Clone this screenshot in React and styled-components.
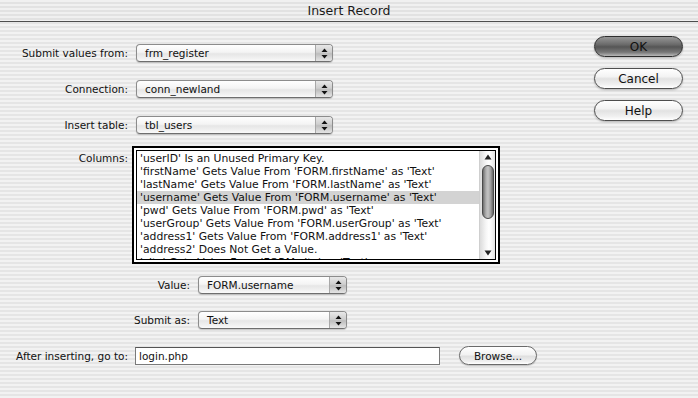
import React from "react";
import styled, { createGlobalStyle } from "styled-components";

const GlobalStyle = createGlobalStyle`
  html, body {
    margin: 0;
    padding: 0;
  }
  body {
    width: 698px;
    height: 398px;
    overflow: hidden;
    font-family: "Lucida Grande", "DejaVu Sans", sans-serif;
    color: #111;
  }
`;

const pinstripe = `repeating-linear-gradient(
  to bottom,
  #f2f2f2 0px,
  #f2f2f2 2px,
  #e5e5e5 2px,
  #e5e5e5 4px
)`;

const columns = [
  "'userID' Is an Unused Primary Key.",
  "'firstName' Gets Value From 'FORM.firstName' as 'Text'",
  "'lastName' Gets Value From 'FORM.lastName' as 'Text'",
  "'username' Gets Value From 'FORM.username' as 'Text'",
  "'pwd' Gets Value From 'FORM.pwd' as 'Text'",
  "'userGroup' Gets Value From 'FORM.userGroup' as 'Text'",
  "'address1' Gets Value From 'FORM.address1' as 'Text'",
  "'address2' Does Not Get a Value.",
  "'city' Gets Value From 'FORM.city' as 'Text'"
];

function UpDown() {
  return (
    <svg width="7" height="11" viewBox="0 0 7 11">
      <path d="M3.5 0.5 L6.5 4 L0.5 4 Z" fill="#111" />
      <path d="M0.5 7 L6.5 7 L3.5 10.5 Z" fill="#111" />
    </svg>
  );
}

function Arrow({ down }) {
  return (
    <svg width="8" height="6" viewBox="0 0 8 6">
      {down ? (
        <path d="M0.5 0.5 L7.5 0.5 L4 5.5 Z" fill="#222" />
      ) : (
        <path d="M4 0.5 L7.5 5.5 L0.5 5.5 Z" fill="#222" />
      )}
    </svg>
  );
}

function Popup({ value, width }) {
  return (
    <PopupBox $width={width}>
      <PopupValue>{value}</PopupValue>
      <PopupArrows>
        <UpDown />
      </PopupArrows>
    </PopupBox>
  );
}

export default function App() {
  return (
    <Window>
      <GlobalStyle />
      <TitleBar>Insert Record</TitleBar>
      <Body>
        <Main>
          <Row $mt={22}>
            <Label $width={128}>Submit values from:</Label>
            <Popup value="frm_register" width={197} />
          </Row>
          <Row $mt={18}>
            <Label $width={128}>Connection:</Label>
            <Popup value="conn_newland" width={197} />
          </Row>
          <Row $mt={18}>
            <Label $width={128}>Insert table:</Label>
            <Popup value="tbl_users" width={197} />
          </Row>
          <Row $mt={12} $top $gap={4}>
            <Label $width={128} $pt={6}>Columns:</Label>
            <ListFrame>
              <ListInner>
                <ListItems>
                  {columns.map((c, i) => (
                    <ListItem key={i} $selected={i === 3}>
                      {c}
                    </ListItem>
                  ))}
                </ListItems>
                <ScrollBar>
                  <ScrollArrow>
                    <Arrow />
                  </ScrollArrow>
                  <Thumb />
                  <Track />
                  <ScrollArrow>
                    <Arrow down />
                  </ScrollArrow>
                </ScrollBar>
              </ListInner>
            </ListFrame>
          </Row>
          <Row $mt={12}>
            <Label $width={190}>Value:</Label>
            <Popup value="FORM.username" width={149} />
          </Row>
          <Row $mt={17}>
            <Label $width={190}>Submit as:</Label>
            <Popup value="Text" width={149} />
          </Row>
          <Row $mt={17} $gap={7}>
            <Label $width={128}>After inserting, go to:</Label>
            <TextField>login.php</TextField>
            <SmallButton>Browse...</SmallButton>
          </Row>
        </Main>
        <ButtonColumn>
          <PushButton $default>OK</PushButton>
          <PushButton>Cancel</PushButton>
          <PushButton>Help</PushButton>
        </ButtonColumn>
      </Body>
    </Window>
  );
}

const Window = styled.div`
  width: 698px;
  height: 398px;
  background: ${pinstripe};
  display: flex;
  flex-direction: column;
`;

const TitleBar = styled.div`
  height: 21px;
  flex: 0 0 21px;
  border-bottom: 1px solid #4e4e4e;
  display: flex;
  align-items: center;
  justify-content: center;
  font-size: 12.5px;
  color: #1a1a1a;
  background: repeating-linear-gradient(
    to bottom,
    #f0f0f0 0px,
    #f0f0f0 2px,
    #e2e2e2 2px,
    #e2e2e2 4px
  );
`;

const Body = styled.div`
  display: flex;
  flex: 1;
`;

const Main = styled.div`
  flex: 0 0 594px;
  display: flex;
  flex-direction: column;
`;

const Row = styled.div`
  display: flex;
  align-items: ${({ $top }) => ($top ? "flex-start" : "center")};
  gap: ${({ $gap }) => $gap ?? 8}px;
  margin-top: ${({ $mt }) => $mt}px;
`;

const Label = styled.div`
  width: ${({ $width }) => $width}px;
  flex: 0 0 auto;
  text-align: right;
  font-size: 10.5px;
  padding-top: ${({ $pt }) => $pt || 0}px;
  white-space: nowrap;
`;

const PopupBox = styled.div`
  width: ${({ $width }) => $width}px;
  height: 18px;
  box-sizing: border-box;
  border: 1px solid #8c8c8c;
  border-bottom-color: #6e6e6e;
  border-radius: 4px;
  display: flex;
  overflow: hidden;
  background: linear-gradient(
    to bottom,
    #ffffff 0%,
    #f4f4f4 45%,
    #e6e6e6 55%,
    #f2f2f2 85%,
    #fafafa 100%
  );
  box-shadow: 0 1px 1px rgba(0, 0, 0, 0.18);
`;

const PopupValue = styled.div`
  flex: 1;
  font-size: 10.5px;
  line-height: 16px;
  padding-left: 8px;
  white-space: nowrap;
`;

const PopupArrows = styled.div`
  width: 16px;
  display: flex;
  align-items: center;
  justify-content: center;
  border-left: 1px solid #a8a8a8;
  background: linear-gradient(
    to bottom,
    #e8e8e8 0%,
    #cfcfcf 45%,
    #bdbdbd 55%,
    #d8d8d8 85%,
    #e4e4e4 100%
  );
`;

const ListFrame = styled.div`
  width: 368px;
  height: 118px;
  box-sizing: border-box;
  border: 2px solid #000;
  background: #fff;
  padding: 2px;
`;

const ListInner = styled.div`
  height: 100%;
  box-sizing: border-box;
  border: 1px solid #000;
  display: flex;
  overflow: hidden;
`;

const ListItems = styled.div`
  flex: 1;
  padding-top: 1px;
  overflow: hidden;
`;

const ListItem = styled.div`
  height: 13px;
  line-height: 13px;
  font-size: 10.8px;
  padding-left: 3px;
  white-space: nowrap;
  background: ${({ $selected }) => ($selected ? "#d3d3d3" : "transparent")};
`;

const ScrollBar = styled.div`
  width: 15px;
  display: flex;
  flex-direction: column;
  align-items: center;
  border-left: 1px solid #cfcfcf;
  background: linear-gradient(
    to right,
    #dcdcdc 0%,
    #f6f6f6 40%,
    #ffffff 60%,
    #e4e4e4 100%
  );
`;

const ScrollArrow = styled.div`
  height: 12px;
  display: flex;
  align-items: center;
  justify-content: center;
`;

const Thumb = styled.div`
  width: 12px;
  height: 54px;
  margin-top: 2px;
  box-sizing: border-box;
  border: 1px solid #4a4a4a;
  border-radius: 6px;
  background: linear-gradient(
    to right,
    #6e6e6e 0%,
    #b0b0b0 30%,
    #c4c4c4 50%,
    #a0a0a0 75%,
    #666 100%
  );
`;

const Track = styled.div`
  flex: 1;
`;

const TextField = styled.div`
  width: 305px;
  height: 18px;
  box-sizing: border-box;
  border: 1px solid #7a7a7a;
  border-top-color: #555;
  background: #fff;
  font-size: 10.5px;
  line-height: 16px;
  padding-left: 3px;
`;

const SmallButton = styled.div`
  width: 78px;
  height: 19px;
  margin-left: 12px;
  box-sizing: border-box;
  border: 1px solid #6a6a6a;
  border-radius: 10px;
  font-size: 10.5px;
  display: flex;
  align-items: center;
  justify-content: center;
  background: linear-gradient(
    to bottom,
    #ffffff 0%,
    #f2f2f2 45%,
    #e0e0e0 55%,
    #f0f0f0 85%,
    #ffffff 100%
  );
  box-shadow: 0 1px 1px rgba(0, 0, 0, 0.2);
`;

const ButtonColumn = styled.div`
  display: flex;
  flex-direction: column;
  gap: 11px;
  padding-top: 14px;
`;

const PushButton = styled.div`
  width: 89px;
  height: 21px;
  box-sizing: border-box;
  border: 1px solid ${({ $default }) => ($default ? "#2e2e2e" : "#4e4e4e")};
  border-radius: 11px;
  font-size: 12px;
  display: flex;
  align-items: center;
  justify-content: center;
  color: #111;
  background: ${({ $default }) =>
    $default
      ? `linear-gradient(to bottom, #969696 0%, #6a6a6a 40%, #555 52%, #777 80%, #b8b8b8 100%)`
      : `linear-gradient(to bottom, #ffffff 0%, #f3f3f3 40%, #e2e2e2 52%, #f1f1f1 82%, #ffffff 100%)`};
  box-shadow: 0 1px 2px rgba(0, 0, 0, 0.25);
`;
